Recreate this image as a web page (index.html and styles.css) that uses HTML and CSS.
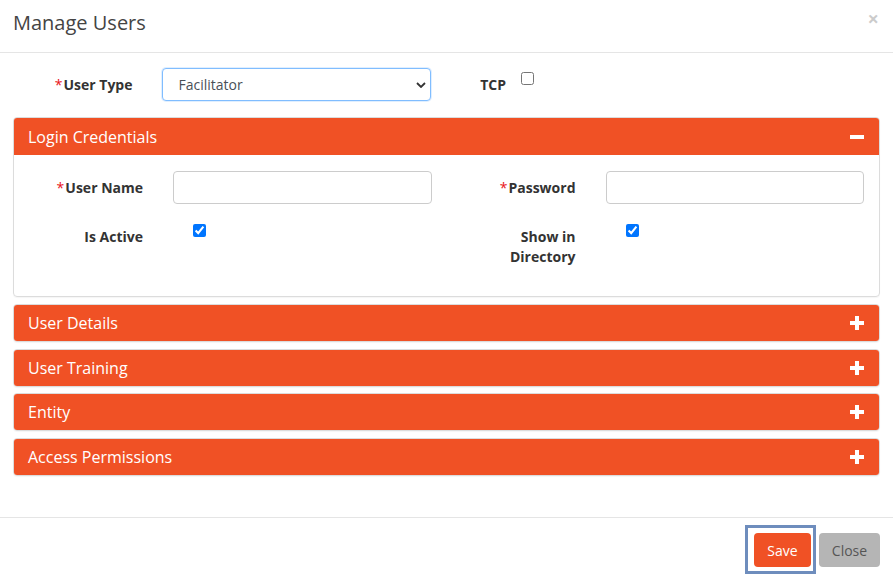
FILE: index.html
```html
<!DOCTYPE html>
<html>
<head>
<meta charset="utf-8">
<title>Manage Users</title>
<link rel="stylesheet" href="styles.css">
</head>
<body>
<div class="modal">
  <div class="modal-header">
    <h4 class="modal-title">Manage Users</h4>
    <span class="close">&times;</span>
  </div>
  <div class="modal-body">
    <div class="top-row">
      <label class="form-label"><span class="req">*</span>User Type</label>
      <div class="select-wrap">
        <select class="form-select">
          <option>Facilitator</option>
        </select>
        <svg class="chevron" width="10" height="6" viewBox="0 0 10 6"><path d="M1 1 L5 5 L9 1" fill="none" stroke="#333" stroke-width="1.8"/></svg>
      </div>
      <label class="form-label">TCP</label>
      <input type="checkbox" class="check tcp-check">
    </div>

    <div class="panel">
      <div class="panel-heading">
        <span class="panel-title">Login Credentials</span>
        <svg class="toggle" width="14" height="14" viewBox="0 0 14 14"><rect x="0" y="5" width="14" height="4" fill="#fff"/></svg>
      </div>
      <div class="panel-body">
        <div class="form-grid">
          <label class="form-label"><span class="req">*</span>User Name</label>
          <input type="text" class="form-control">
          <label class="form-label"><span class="req">*</span>Password</label>
          <input type="password" class="form-control">

          <label class="form-label">Is Active</label>
          <div class="check-cell"><input type="checkbox" class="check" checked></div>
          <label class="form-label">Show in<br>Directory</label>
          <div class="check-cell"><input type="checkbox" class="check" checked></div>
        </div>
      </div>
    </div>

    <div class="panel collapsed">
      <div class="panel-heading">
        <span class="panel-title">User Details</span>
        <svg class="toggle" width="14" height="14" viewBox="0 0 14 14"><rect x="0" y="5" width="14" height="4" fill="#fff"/><rect x="5" y="0" width="4" height="14" fill="#fff"/></svg>
      </div>
    </div>
    <div class="panel collapsed">
      <div class="panel-heading">
        <span class="panel-title">User Training</span>
        <svg class="toggle" width="14" height="14" viewBox="0 0 14 14"><rect x="0" y="5" width="14" height="4" fill="#fff"/><rect x="5" y="0" width="4" height="14" fill="#fff"/></svg>
      </div>
    </div>
    <div class="panel collapsed">
      <div class="panel-heading">
        <span class="panel-title">Entity</span>
        <svg class="toggle" width="14" height="14" viewBox="0 0 14 14"><rect x="0" y="5" width="14" height="4" fill="#fff"/><rect x="5" y="0" width="4" height="14" fill="#fff"/></svg>
      </div>
    </div>
    <div class="panel collapsed">
      <div class="panel-heading">
        <span class="panel-title">Access Permissions</span>
        <svg class="toggle" width="14" height="14" viewBox="0 0 14 14"><rect x="0" y="5" width="14" height="4" fill="#fff"/><rect x="5" y="0" width="4" height="14" fill="#fff"/></svg>
      </div>
    </div>
  </div>
  <div class="modal-footer">
    <button class="btn btn-save">Save</button>
    <button class="btn btn-close">Close</button>
  </div>
</div>
</body>
</html>
```

FILE: styles.css
```css
* { box-sizing: border-box; }

html, body {
  margin: 0;
  padding: 0;
  background: #fff;
}

body {
  font-family: "Open Sans", "Liberation Sans", sans-serif;
  font-size: 14px;
  line-height: 1.5;
  color: #333;
}

.modal {
  width: 893px;
  height: 579px;
  background: #fff;
}

.modal-header {
  height: 53px;
  border-bottom: 1px solid #e5e5e5;
  padding: 9px 14px 0 13px;
  display: flex;
  justify-content: space-between;
  align-items: flex-start;
}

.modal-title {
  margin: 0;
  font-size: 20px;
  font-weight: 400;
  line-height: 28px;
  color: #444;
}

.close {
  font-size: 20px;
  font-weight: 700;
  line-height: 20px;
  color: #000;
  opacity: 0.2;
  margin-top: 0;
}

.modal-body {
  padding: 15px 13px 0 13px;
  height: 464px;
}

.top-row {
  display: grid;
  grid-template-columns: 119.5px 269px 44.5px auto;
  column-gap: 30px;
  align-items: start;
  height: 33px;
}

.form-label {
  font-weight: 700;
  font-size: 14px;
  line-height: 20px;
  text-align: right;
  color: #333;
  padding-top: 7px;
}

.req {
  color: #e8131b;
  font-weight: 400;
  margin-right: 1px;
}

.select-wrap {
  position: relative;
  height: 33px;
  margin-left: -1px;
  margin-right: 1px;
}

.form-select {
  -webkit-appearance: none;
  appearance: none;
  width: 100%;
  height: 33px;
  border: 1px solid #80bdff;
  border-radius: 4px;
  box-shadow: 0 0 0 1px rgba(0, 123, 255, 0.12);
  background: #fff;
  padding: 0 30px 0 16px;
  font-family: "Open Sans", "Liberation Sans", sans-serif;
  font-size: 14px;
  color: #495057;
  outline: none;
}

.chevron {
  position: absolute;
  right: 5px;
  top: 14px;
}

.check {
  width: 13px;
  height: 13px;
  margin: 0;
}

.tcp-check {
  margin-left: -15px;
  margin-top: 4px;
}

.panel {
  border: 1px solid #dcdcdc;
  border-radius: 4px;
  overflow: hidden;
  margin-top: 16px;
  box-shadow: 0 1px 1px rgba(0, 0, 0, 0.04);
}

.panel.collapsed {
  margin-top: 7px;
}

.panel.collapsed + .panel.collapsed {
  margin-top: 6.67px;
}

.panel-heading {
  background: #f05125;
  height: 37px;
  display: flex;
  align-items: center;
  justify-content: space-between;
  padding: 0 15px 0 14px;
  color: #fff;
}

.panel.collapsed .panel-heading {
  height: 36px;
}

.panel-title {
  font-size: 16px;
  font-weight: 400;
  line-height: 24px;
}

.toggle {
  display: block;
}

.panel-body {
  padding: 16px 15px 20px 15px;
}

.form-grid {
  display: grid;
  grid-template-columns: 114px 258.5px 114px 258.5px;
  column-gap: 30px;
  row-gap: 16px;
  align-items: start;
}

.form-control {
  height: 33px;
  width: 100%;
  border: 1px solid #ccc;
  border-radius: 4px;
  background: #fff;
  font-family: inherit;
  font-size: 14px;
  padding: 0 12px;
}

.check-cell {
  padding-left: 20px;
  padding-top: 4px;
  height: 56px;
}

.check-cell .check {
  display: block;
}

.modal-footer {
  border-top: 1px solid #e5e5e5;
  padding: 15px 13px 0 0;
  display: flex;
  justify-content: flex-end;
  gap: 8px;
}

.btn {
  height: 34px;
  border: none;
  border-radius: 4px;
  font-family: "Open Sans", "Liberation Sans", sans-serif;
  font-size: 14px;
  padding: 0 12px;
  cursor: pointer;
}

.btn-save {
  position: relative;
  background: #f05125;
  color: #fff;
  width: 57px;
}

.btn-save::after {
  content: "";
  position: absolute;
  top: -8px;
  left: -9px;
  right: -5px;
  bottom: -7px;
  border: 3px solid #6e8dbd;
}

.btn-close {
  background: #b5b5b5;
  color: #555;
  width: 61px;
}
```
